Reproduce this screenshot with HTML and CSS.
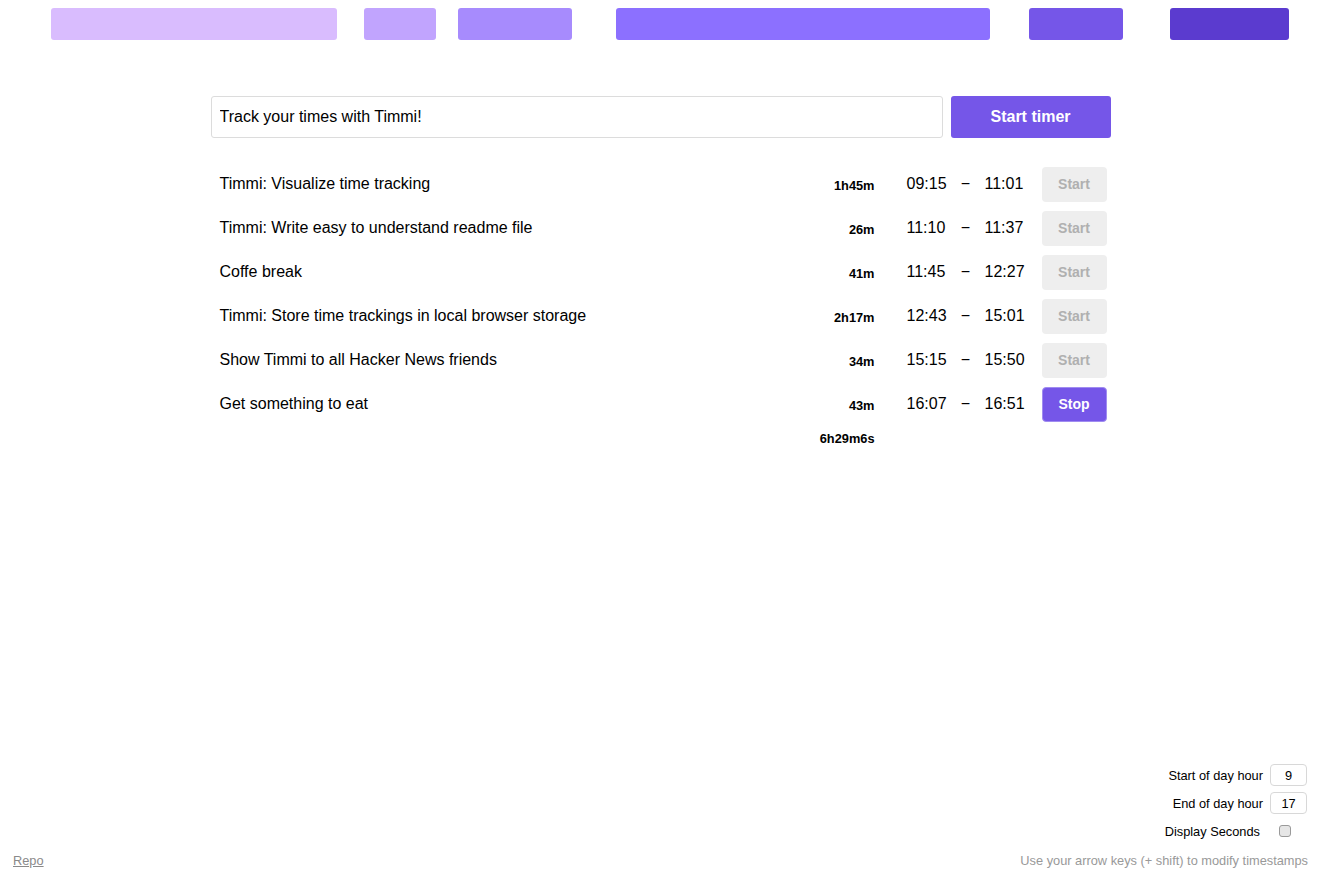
FILE: index.html
```html
<!DOCTYPE html>
<html lang="en">
<head>
<meta charset="utf-8">
<title>Timmi</title>
<link rel="stylesheet" href="styles.css">
</head>
<body>
<div class="page">
  <div class="timeline">
    <div class="seg" style="left:51px;width:286px;background:#d9bcfe"></div>
    <div class="seg" style="left:364px;width:72px;background:#c1a4fe"></div>
    <div class="seg" style="left:458px;width:114px;background:#a78bfd"></div>
    <div class="seg" style="left:616px;width:374px;background:#8c70ff"></div>
    <div class="seg" style="left:1029px;width:94px;background:#7556e8"></div>
    <div class="seg" style="left:1170px;width:119px;background:#5b3bcf"></div>
  </div>

  <main class="main">
    <form class="new-entry" onsubmit="return false">
      <input class="entry-input" type="text" value="Track your times with Timmi!">
      <button class="btn-primary" type="submit">Start timer</button>
    </form>

    <div class="entries">
      <div class="entry">
        <span class="title">Timmi: Visualize time tracking</span>
        <span class="dur">1h45m</span>
        <span class="time">09:15</span><span class="dash">−</span><span class="time">11:01</span>
        <button class="btn-start">Start</button>
      </div>
      <div class="entry">
        <span class="title">Timmi: Write easy to understand readme file</span>
        <span class="dur">26m</span>
        <span class="time">11:10</span><span class="dash">−</span><span class="time">11:37</span>
        <button class="btn-start">Start</button>
      </div>
      <div class="entry">
        <span class="title">Coffe break</span>
        <span class="dur">41m</span>
        <span class="time">11:45</span><span class="dash">−</span><span class="time">12:27</span>
        <button class="btn-start">Start</button>
      </div>
      <div class="entry">
        <span class="title">Timmi: Store time trackings in local browser storage</span>
        <span class="dur">2h17m</span>
        <span class="time">12:43</span><span class="dash">−</span><span class="time">15:01</span>
        <button class="btn-start">Start</button>
      </div>
      <div class="entry">
        <span class="title">Show Timmi to all Hacker News friends</span>
        <span class="dur">34m</span>
        <span class="time">15:15</span><span class="dash">−</span><span class="time">15:50</span>
        <button class="btn-start">Start</button>
      </div>
      <div class="entry">
        <span class="title">Get something to eat</span>
        <span class="dur">43m</span>
        <span class="time">16:07</span><span class="dash">−</span><span class="time">16:51</span>
        <button class="btn-stop">Stop</button>
      </div>
      <div class="total">
        <span class="title"></span>
        <span class="dur">6h29m6s</span>
      </div>
    </div>
  </main>

  <div class="spacer"></div>

  <div class="settings">
    <label class="setting"><span class="label">Start of day hour</span><input class="num" type="text" value="9"></label>
    <label class="setting"><span class="label">End of day hour</span><input class="num" type="text" value="17"></label>
    <label class="setting"><span class="label label-check">Display Seconds</span><span class="check-cell"><input class="check" type="checkbox"></span></label>
  </div>

  <footer class="footer">
    <a class="repo" href="#">Repo</a>
    <span class="hint">Use your arrow keys (+ shift) to modify timestamps</span>
  </footer>
</div>
</body>
</html>
```

FILE: styles.css
```css
* { box-sizing: border-box; }

html, body {
  margin: 0;
  padding: 0;
  background: #fff;
  color: #000;
  font-family: "Liberation Sans", Arial, sans-serif;
}

.page {
  min-height: 100vh;
  display: flex;
  flex-direction: column;
}

.timeline {
  position: relative;
  height: 48px;
}

.seg {
  position: absolute;
  top: 8px;
  height: 32px;
  border-radius: 3px;
}

.main {
  width: 900px;
  margin: 48px auto 0;
}

.new-entry {
  display: flex;
  gap: 8px;
  margin: 0;
}

.entry-input {
  flex: 1;
  height: 42px;
  border: 1px solid #dcdcdc;
  border-radius: 3px;
  padding: 0 8px;
  font-family: "Liberation Sans", Arial, sans-serif;
  font-size: 16px;
  color: #000;
  outline: none;
}

.btn-primary {
  width: 160px;
  height: 42px;
  border: none;
  border-radius: 3px;
  background: #7556e8;
  color: #fff;
  font-family: "Liberation Sans", Arial, sans-serif;
  font-size: 16px;
  font-weight: bold;
}

.entries {
  margin-top: 24px;
}

.entry, .total {
  display: flex;
  align-items: center;
  height: 44px;
  padding: 0 4px 0 9px;
}

.total {
  height: 22px;
  padding-right: 236px;
}

.title {
  flex: 1;
  font-size: 16px;
}

.dur {
  width: 100px;
  text-align: right;
  font-size: 12.8px;
  font-weight: bold;
  padding-top: 2px;
}

.time {
  width: 40px;
  font-size: 16px;
}

.dur + .time {
  margin-left: 32px;
}

.dash {
  width: 38px;
  text-align: center;
  font-size: 16px;
}

.btn-start, .btn-stop {
  margin-left: 17px;
  width: 65px;
  height: 35px;
  border-radius: 4px;
  font-family: "Liberation Sans", Arial, sans-serif;
  font-size: 14px;
  font-weight: bold;
}

.btn-start {
  border: none;
  background: #eeeeee;
  color: #b0b0b0;
}

.btn-stop {
  border: 1px solid #a08cf0;
  background: #7556e8;
  color: #fff;
}

.spacer {
  flex: 1;
}

.settings {
  display: flex;
  flex-direction: column;
  align-items: flex-end;
  padding-right: 14px;
}

.setting {
  display: flex;
  align-items: center;
  height: 22px;
  margin-bottom: 6px;
  font-size: 12.8px;
}

.setting:last-child {
  margin-bottom: 0;
}

.label {
  margin-right: 7px;
}

.label-check {
  margin-right: 10px;
}

.num {
  width: 37px;
  height: 22px;
  border: 1px solid #d8d8d8;
  border-radius: 4px;
  text-align: center;
  font-family: "Liberation Sans", Arial, sans-serif;
  font-size: 12.8px;
  color: #000;
  padding: 0;
  outline: none;
}

.check-cell {
  width: 37px;
  display: flex;
  align-items: center;
  padding-left: 9px;
}

.check {
  appearance: none;
  -webkit-appearance: none;
  margin: 0;
  width: 12px;
  height: 12px;
  border: 1px solid #9a9a9a;
  border-radius: 3px;
  background: #e6e6e6;
}

.footer {
  display: flex;
  justify-content: space-between;
  align-items: center;
  height: 16px;
  margin: 10px 13px 13px;
  font-size: 12.8px;
}

.repo {
  color: #8a8a8a;
  text-decoration: underline;
}

.hint {
  color: #999;
}
```
